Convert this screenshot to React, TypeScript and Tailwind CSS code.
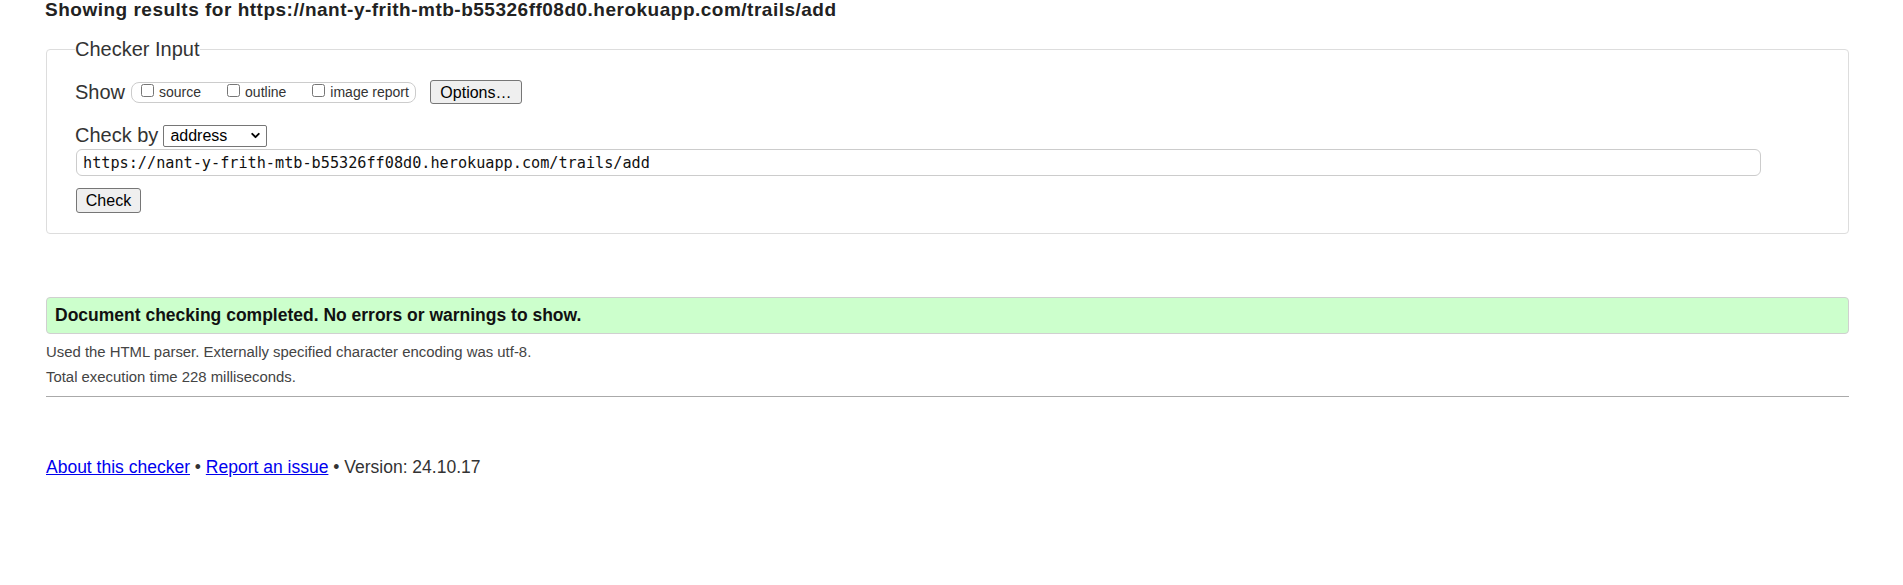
import { ChevronDown } from 'lucide-react';

const checkUrl = 'https://nant-y-frith-mtb-b55326ff08d0.herokuapp.com/trails/add';

const showOptions = ['source', 'outline', 'image report'];

function ShowOptions() {
  return (
    <div className="flex items-center h-[21px] rounded-[8px] border border-[#cccccc] pl-[9px] pr-[6px]">
      {showOptions.map((opt, i) => (
        <label key={opt} className={`flex items-center text-[14px] leading-[16px] text-[#333] ${i > 0 ? 'ml-[26px]' : ''}`}>
          <input type="checkbox" className="m-0 mb-[3px] mr-[5px] w-[13px] h-[13px]" />
          {opt}
        </label>
      ))}
    </div>
  );
}

export default function App() {
  return (
    <div className="min-h-screen bg-white pl-[46px] pr-[54px] font-['Liberation_Sans',Arial,sans-serif] text-[#333]">
      <h2 className="-ml-px text-[19px] leading-[20px] tracking-[0.5px] font-bold text-[#222]">
        Showing results for {checkUrl}
      </h2>

      <fieldset className="mt-[18px] rounded-[4px] border border-[#dddddd] px-[28px] pt-[20px] pb-[20px]">
        <legend className="text-[20px] leading-[22px] text-[#333]">Checker Input</legend>

        <div className="flex items-center h-[24px]">
          <span className="text-[20px] leading-[23px] mr-[6px]">Show</span>
          <ShowOptions />
          <button className="ml-[14px] w-[92px] h-[24px] rounded-[3px] border border-[#767676] bg-[#efefef] text-[16px] text-black">
            Options…
          </button>
        </div>

        <div className="flex items-center h-[24px] mt-[19px]">
          <span className="text-[20px] leading-[23px] mr-[5px]">Check by</span>
          <div className="relative w-[104px] h-[22px]">
            <select className="w-full h-full appearance-none rounded-[2px] border border-[#767676] bg-white pl-[6px] text-[16px] leading-[20px] text-black">
              <option>address</option>
              <option>file upload</option>
              <option>text input</option>
            </select>
            <ChevronDown className="pointer-events-none absolute right-[5px] top-[5px] w-[13px] h-[13px] text-black" strokeWidth={3.5} />
          </div>
        </div>

        <input
          type="text"
          defaultValue={checkUrl}
          className="block mt-[2px] ml-px w-[1685px] h-[27px] rounded-[6px] border border-[#cccccc] pl-[6px] font-['DejaVu_Sans_Mono','Liberation_Mono',monospace] text-[15.2px] text-[#111]"
        />

        <button className="block mt-[12px] ml-px w-[65px] h-[25px] rounded-[3px] border border-[#767676] bg-[#efefef] text-[16px] text-black">
          Check
        </button>
      </fieldset>

      <div className="mt-[63px] h-[37px] rounded-[4px] border border-[#d0d0d0] bg-[#ccffcc] pl-[8px] pt-[7px]">
        <p className="text-[17.5px] leading-[20px] font-bold text-[#111]">
          Document checking completed. No errors or warnings to show.
        </p>
      </div>

      <p className="mt-[6px] text-[14.9px] leading-[25px] text-[#444]">
        Used the HTML parser. Externally specified character encoding was utf-8.
      </p>
      <p className="text-[14.9px] leading-[25px] text-[#444]">Total execution time 228 milliseconds.</p>

      <hr className="mt-[6px] border-t border-[#aaaaaa]" />

      <p className="mt-[60px] text-[17.5px] leading-[20px] text-[#333]">
        <a href="#" className="text-[#0000ee] underline">About this checker</a>
        {' • '}
        <a href="#" className="text-[#0000ee] underline">Report an issue</a>
        {' • Version: 24.10.17'}
      </p>
    </div>
  );
}
